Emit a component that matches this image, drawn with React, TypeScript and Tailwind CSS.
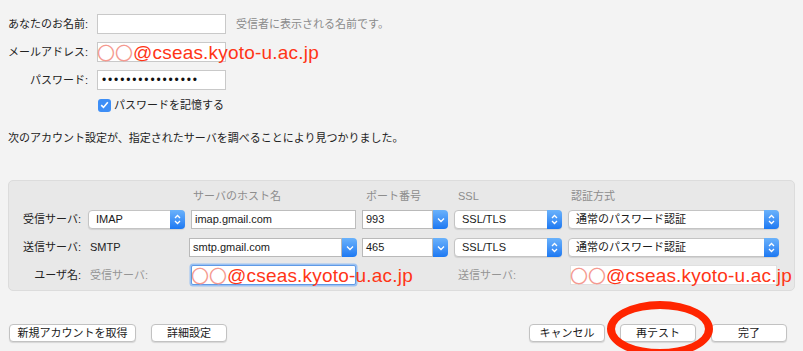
import React from "react";

const UpDown = () => (
  <svg width="7" height="11" viewBox="0 0 7 11" fill="none">
    <path d="M1 4 L3.5 1.5 L6 4" stroke="white" strokeWidth="1.3" />
    <path d="M1 7 L3.5 9.5 L6 7" stroke="white" strokeWidth="1.3" />
  </svg>
);

const Down = () => (
  <svg width="8" height="6" viewBox="0 0 8 6" fill="none">
    <path d="M1 1.5 L4 4.5 L7 1.5" stroke="white" strokeWidth="1.3" />
  </svg>
);

const Popup = ({ value }: { value: string }) => (
  <div className="flex h-[19px] w-full items-center rounded-[4px] border border-[#c4c4c4] bg-white shadow-[0_1px_1px_rgba(0,0,0,0.1)]">
    <span className="flex-1 pl-[7px] text-[11px] text-[#1a1a1a]">{value}</span>
    <div className="flex h-[19px] w-[15px] -mr-px items-center justify-center rounded-r-[4px] bg-linear-to-b from-[#6ab2fb] to-[#1b78f2]">
      <UpDown />
    </div>
  </div>
);

const Combo = ({ value }: { value: string }) => (
  <div className="flex h-[19px] w-full">
    <div className="flex flex-1 items-center border border-[#b9b9b9] bg-white pl-[3px] text-[11px] text-[#1a1a1a]">
      {value}
    </div>
    <div className="flex w-[15px] items-center justify-center rounded-r-[4px] bg-linear-to-b from-[#6ab2fb] to-[#1b78f2]">
      <Down />
    </div>
  </div>
);

const TextBox = ({ value }: { value?: string }) => (
  <div className="flex h-[19px] w-full items-center border border-[#bdbdbd] bg-white pl-[3px] text-[11px] text-[#1a1a1a]">
    {value}
  </div>
);

// red annotation drawn over the screenshot
const RedMail = () => (
  <span className="flex items-center whitespace-nowrap leading-none">
    <span className="font-['Noto_Sans_CJK_JP',sans-serif] text-[18px] text-[#f59a90]">〇〇</span>
    <span className="text-[19px] tracking-[0.2px] text-[#ff3516]">@cseas.kyoto-u.ac.jp</span>
  </span>
);

const Button = ({ label, w }: { label: string; w: string }) => (
  <button
    className={`${w} h-[18px] rounded-[4px] border border-[#c2c2c2] bg-white text-[11px] text-[#1a1a1a] shadow-[0_1px_1px_rgba(0,0,0,0.12)]`}
  >
    {label}
  </button>
);

const App: React.FC = () => {
  return (
    <div className="relative h-[351px] w-[803px] overflow-hidden bg-[#f3f3f3] font-['Liberation_Sans','Noto_Sans_CJK_JP',sans-serif] text-[11px] text-[#222]">
      {/* account form */}
      <div className="flex flex-col gap-2 pt-[14px]">
        <div className="flex h-[20px] items-center">
          <span className="w-[88px] text-right">あなたのお名前:</span>
          <div className="ml-[9px] h-[20px] w-[129px] border border-[#c9c9c9] bg-white" />
          <span className="ml-[10px] text-[#8b8b8b]">受信者に表示される名前です。</span>
        </div>
        <div className="flex h-[20px] items-center">
          <span className="w-[88px] text-right">メールアドレス:</span>
          <div className="relative ml-[9px] h-[20px] w-[129px] border border-[#c9c9c9] bg-white">
            <div className="absolute -left-px inset-y-0 flex items-center">
              <RedMail />
            </div>
          </div>
        </div>
        <div className="flex h-[20px] items-center">
          <span className="w-[88px] text-right">パスワード:</span>
          <div className="ml-[9px] flex h-[20px] w-[129px] items-center border border-[#c9c9c9] bg-white pl-[4px] text-[12px] tracking-[1.85px] text-[#111]">
            ••••••••••••••••
          </div>
        </div>
        <div className="ml-[98px] flex h-[14px] items-center gap-[3px]">
          <div className="flex h-[13px] w-[13px] items-center justify-center rounded-[3px] bg-[#3d8ef6]">
            <svg width="9" height="8" viewBox="0 0 9 8" fill="none">
              <path d="M1.2 4.2 L3.5 6.4 L7.8 1.3" stroke="white" strokeWidth="1.6" />
            </svg>
          </div>
          <span>パスワードを記憶する</span>
        </div>
      </div>

      <p className="ml-[8px] mt-[18px] leading-[16px]">
        次のアカウント設定が、指定されたサーバを調べることにより見つかりました。
      </p>

      {/* server settings */}
      <div className="mx-[8px] mt-[34px] h-[111px] rounded-[5px] border border-[#dcdcdc] bg-[#e8e8e8] pt-[8px]">
        <div className="grid grid-cols-[73px_97px_165px_86px_108px_211px] gap-x-[6px] leading-[14px] text-[#8d8d8d]">
          <span />
          <span />
          <span className="pl-[2px]">サーバのホスト名</span>
          <span className="pl-[4px]">ポート番号</span>
          <span className="pl-[4px]">SSL</span>
          <span className="pl-[3px]">認証方式</span>
        </div>
        <div className="mt-[7px] grid grid-cols-[73px_97px_165px_86px_108px_211px] items-center gap-x-[6px]">
          <span className="pr-[1px] text-right">受信サーバ:</span>
          <Popup value="IMAP" />
          <TextBox value="imap.gmail.com" />
          <Combo value="993" />
          <Popup value="SSL/TLS" />
          <Popup value="通常のパスワード認証" />
        </div>
        <div className="mt-[9px] grid grid-cols-[73px_97px_165px_86px_108px_211px] items-center gap-x-[6px]">
          <span className="pr-[1px] text-right">送信サーバ:</span>
          <span className="pl-[2px]">SMTP</span>
          <div className="-ml-[2px] w-[168px]">
            <Combo value="smtp.gmail.com" />
          </div>
          <Combo value="465" />
          <Popup value="SSL/TLS" />
          <Popup value="通常のパスワード認証" />
        </div>
        <div className="mt-[8px] grid grid-cols-[73px_97px_165px_86px_108px_211px] items-center gap-x-[6px]">
          <span className="pr-[1px] text-right">ユーザ名:</span>
          <span className="pl-[2px] text-[#959595]">受信サーバ:</span>
          <div className="relative h-[20px] rounded-[2px] border border-[#5f9ae6] bg-white shadow-[0_0_0_1.5px_#9cc2f2]">
            <div className="absolute -left-px inset-y-0 flex items-center">
              <RedMail />
            </div>
          </div>
          <span />
          <span className="pl-[4px] text-[#959595]">送信サーバ:</span>
          <div className="relative ml-[2px] h-[20px] w-[207px] border border-[#e0e0e0] bg-white">
            <div className="absolute -left-px inset-y-0 flex items-center">
              <RedMail />
            </div>
          </div>
        </div>
      </div>

      {/* buttons */}
      <div className="mt-[33px] flex items-center justify-between pl-[9px] pr-[16px]">
        <div className="flex gap-[15px]">
          <Button label="新規アカウントを取得" w="w-[127px]" />
          <Button label="詳細設定" w="w-[76px]" />
        </div>
        <div className="flex gap-[15px]">
          <Button label="キャンセル" w="w-[76px]" />
          <Button label="再テスト" w="w-[76px]" />
          <Button label="完了" w="w-[76px]" />
        </div>
      </div>

      {/* red annotation ring */}
      <div className="absolute left-[607px] top-[301px] h-[56px] w-[106px] rounded-[50%] border-[8px] border-[#ff2500]" />
    </div>
  );
};

export default App;
